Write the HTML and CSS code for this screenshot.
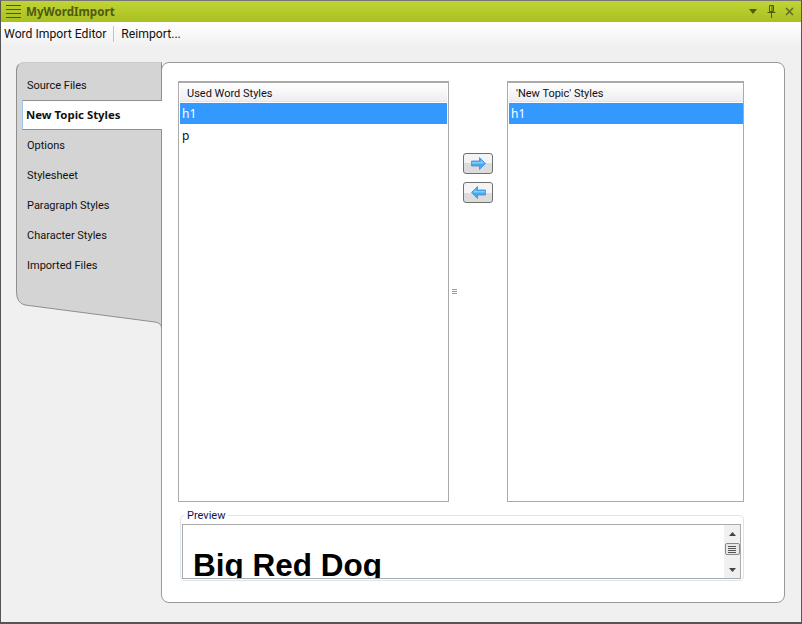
FILE: index.html
```html
<!DOCTYPE html>
<html lang="en">
<head>
  <meta charset="UTF-8" />
  <title>MyWordImport</title>
  <link rel="stylesheet" href="styles.css">
</head>
<body>
  <div class="window">
    <div class="titlebar">
      <div class="menu-icon"><span></span><span></span><span></span><span></span></div>
      <div class="title">MyWordImport</div>
      <div class="title-buttons">
        <svg width="10" height="6" viewBox="0 0 10 6"><path d="M1 0h8L5 5z" fill="#4f5a10"/></svg>
        <svg width="9" height="13" viewBox="0 0 9 13"><path d="M2.500 .5h4v6h-4zM5 1v5M.5 7.500h8M4.500 8v5" fill="none" stroke="#4f5a10"/></svg>
        <svg width="9" height="9" viewBox="0 0 9 9"><path d="M1 1l7 7M8 1l-7 7" fill="none" stroke="#5f6a20" stroke-width="1.500"/></svg>
      </div>
    </div>

    <div class="toolbar">
      <span class="tool">Word Import Editor</span>
      <span class="tool-sep"></span>
      <span class="tool">Reimport...</span>
    </div>

    <div class="content">
      <div class="sidebar">
        <div class="tabs">
          <div class="tab">Source Files</div>
          <div class="tab active">New Topic Styles</div>
          <div class="tab">Options</div>
          <div class="tab">Stylesheet</div>
          <div class="tab">Paragraph Styles</div>
          <div class="tab">Character Styles</div>
          <div class="tab">Imported Files</div>
        </div>
        <svg class="tabs-end" width="146" height="36" viewBox="0 0 146 36">
          <path d="M.5 0Q.5 11 9 13L139 30Q145.500 31 145.500 36H146V0z" fill="#d4d4d4"/>
          <path d="M.5 0Q.5 11 9 13L139 30Q145.500 31 145.500 36V0" fill="none" stroke="#8f8f8f"/>
        </svg>
      </div>

      <div class="panel">
        <div class="lists">
          <div class="list list-used">
            <div class="list-header">Used Word Styles</div>
            <div class="row selected">h1</div>
            <div class="row">p</div>
          </div>

          <div class="splitter"><span class="grip"></span></div>

          <div class="move-buttons">
            <button class="move">
              <svg width="15" height="13" viewBox="0 0 15 13"><path d="M.5 4h8V.5l6 6-6 6V9h-8z" fill="#4aa8ee" stroke="#3f8ee0" stroke-width=".8"/><path d="M1 5h9V3l3 3.500H1z" fill="#86cdf8"/></svg>
            </button>
            <button class="move">
              <svg width="15" height="13" viewBox="0 0 15 13"><path d="M14.500 4h-8V.5l-6 6 6 6V9h8z" fill="#4aa8ee" stroke="#3f8ee0" stroke-width=".8"/><path d="M14 5H5V3L2 6.500h12z" fill="#86cdf8"/></svg>
            </button>
          </div>

          <div class="list list-topic">
            <div class="list-header">'New Topic' Styles</div>
            <div class="row selected">h1</div>
          </div>
        </div>

        <fieldset class="preview">
          <legend>Preview</legend>
          <div class="preview-box">
            <div class="preview-doc">Big Red Dog</div>
            <div class="scrollbar">
              <svg width="7" height="4" viewBox="0 0 7 4"><path d="M3.500 0L7 4H0z" fill="#444"/></svg>
              <div class="thumb"><span></span><span></span><span></span><span></span></div>
              <svg width="7" height="4" viewBox="0 0 7 4"><path d="M0 0h7L3.500 4z" fill="#444"/></svg>
            </div>
          </div>
        </fieldset>
      </div>
    </div>
  </div>
</body>
</html>
```

FILE: styles.css
```css
* {
  box-sizing: border-box;
}

html, body {
  margin: 0;
  height: 100%;
}

body {
  font-family: Roboto, "Noto Sans", sans-serif;
  font-size: 11px;
  color: #111;
  overflow: hidden;
}

.window {
  width: 802px;
  height: 624px;
  display: flex;
  flex-direction: column;
  background: #f0f0f0;
  border: 1px solid #555;
  border-top-color: #777;
  border-bottom-width: 2px;
}

.titlebar {
  height: 21px;
  flex: none;
  display: flex;
  align-items: center;
  padding: 0 5px;
  background: linear-gradient(#c0d435, #aabf22);
}

.menu-icon {
  width: 15px;
  display: flex;
  flex-direction: column;
  gap: 3px;
  margin-right: 5px;
}

.menu-icon span {
  height: 1px;
  background: #4f5a10;
}

.title {
  font-family: "Noto Sans", sans-serif;
  font-size: 11.6px;
  font-weight: bold;
  color: #4f5a10;
}

.title-buttons {
  margin-left: auto;
  display: flex;
  align-items: center;
  gap: 9px;
  padding-right: 2px;
}

.toolbar {
  height: 24px;
  flex: none;
  display: flex;
  align-items: center;
  padding: 0 3px;
  background: linear-gradient(#ffffff, #f1f1f1);
}

.tool {
  font-size: 12.2px;
  line-height: 16px;
}

.tool-sep {
  width: 1px;
  height: 16px;
  margin: 0 7px;
  background: #c4c4c4;
}

.content {
  flex: 1;
  display: flex;
  padding: 16px 16px 19px 15px;
}

.sidebar {
  width: 146px;
  flex: none;
  margin-right: -1px;
  position: relative;
  z-index: 1;
}

.tabs {
  height: 230px;
  padding-top: 7px;
  background: #d4d4d4;
  border: 1px solid #8f8f8f;
  border-width: 1px 1px 0 1px;
  border-top-left-radius: 8px;
  border-top-color: #c8c8c8;
}

.tab {
  height: 30px;
  line-height: 32px;
  padding-left: 10px;
}

.tab.active {
  margin-left: 5px;
  margin-right: -1px;
  padding-left: 3px;
  font-family: "Noto Sans", sans-serif;
  font-size: 11.4px;
  font-weight: bold;
  background: #fff;
  border-top: 1px solid #8f8f8f;
  border-bottom: 1px solid #8f8f8f;
  border-left: 1px solid #9cc8f0;
  line-height: 28px;
}

.tabs-end {
  display: block;
}

.panel {
  flex: 1;
  display: flex;
  flex-direction: column;
  background: #fff;
  border: 1px solid #999;
  border-radius: 8px;
  padding: 18px 40px 20px 16px;
}

.lists {
  height: 421px;
  flex: none;
  display: flex;
}

.list {
  border: 2px solid #aaa;
  border-width: 2px 1px 1px 1px;
  padding: 0 1px;
  background: #fff;
}

.list-used {
  width: 271px;
}

.list-topic {
  width: 237px;
  padding-right: 0;
}

.list-header {
  height: 19px;
  line-height: 21px;
  padding-left: 7px;
  margin-bottom: 1px;
  background: linear-gradient(#fff, #eeeef2);
  border-bottom: 1px solid #e4e4e4;
}

.row {
  height: 21px;
  line-height: 21px;
  padding-left: 2px;
  margin-bottom: 1px;
  font-family: "Noto Sans", sans-serif;
  font-size: 12px;
}

.row.selected {
  background: #3399ff;
  color: #fff;
}

.splitter {
  width: 10px;
  display: flex;
  align-items: center;
  justify-content: center;
}

.grip {
  width: 5px;
  height: 5px;
  border-top: 1px solid #999;
  border-bottom: 1px solid #999;
  background: linear-gradient(#fff 40%, #999 40%, #999 60%, #fff 60%);
}

.move-buttons {
  width: 48px;
  padding: 72px 0 0 4px;
  display: flex;
  flex-direction: column;
  gap: 8px;
}

.move {
  width: 30px;
  height: 21px;
  padding: 0;
  display: flex;
  align-items: center;
  justify-content: center;
  border: 1px solid #707070;
  border-radius: 3px;
  background: linear-gradient(#f4f4f4 50%, #dcdcdc 50%);
}

.preview {
  margin: 6px 0 0 2px;
  padding: 1px 2px 2px 1px;
  height: 73px;
  border: 1px solid #dbe5ee;
  border-radius: 4px;
}

.preview legend {
  margin-left: 2px;
  padding: 0 3px;
  line-height: 15px;
  color: #14145a;
}

.preview-box {
  height: 55px;
  display: flex;
  border: 1px solid #aaa;
  overflow: hidden;
}

.preview-doc {
  flex: 1;
  padding: 22px 0 0 10px;
  font-family: "Liberation Sans", sans-serif;
  font-size: 31.5px;
  font-weight: bold;
  line-height: 37px;
  color: #000;
}

.scrollbar {
  width: 16px;
  flex: none;
  display: flex;
  flex-direction: column;
  align-items: center;
  padding-top: 7px;
  background: #f0f0f0;
}

.thumb {
  width: 15px;
  height: 12px;
  margin: 7px 0 13px;
  display: flex;
  flex-direction: column;
  justify-content: center;
  align-items: center;
  gap: 1px;
  border: 1px solid #888;
  border-radius: 2px;
  background: #e8e8e8;
}

.thumb span {
  width: 8px;
  height: 1px;
  background: #555;
}
```
